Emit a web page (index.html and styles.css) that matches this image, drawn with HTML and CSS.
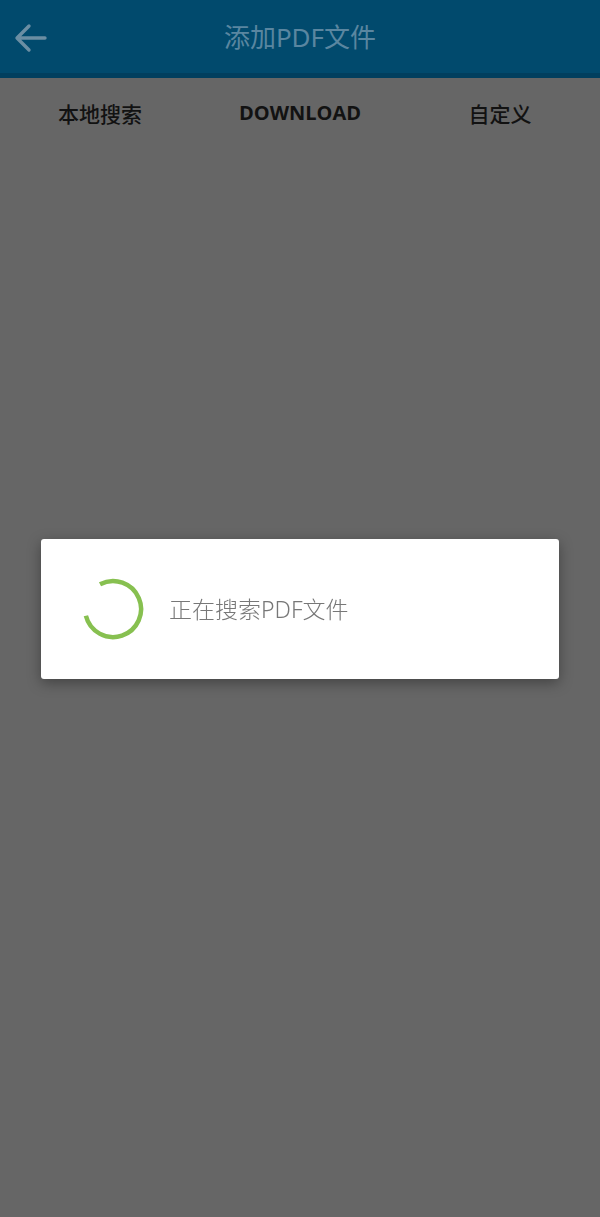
FILE: index.html
```html
<!DOCTYPE html>
<html lang="zh">
  <head>
    <meta name="viewport" content="width=device-width, initial-scale=1.0" />
    <title>添加PDF文件</title>
    <link rel="stylesheet" href="styles.css">
  </head>
  <body>
    <div class="header">
      <svg class="back" width="34" height="30" viewBox="0 0 34 30">
        <path d="M31 15 H4 M15 3 L3 15 L15 27" fill="none" stroke="#6b8ea3" stroke-width="3.4" stroke-linecap="round" stroke-linejoin="round"/>
      </svg>
      <div class="title">添加PDF文件</div>
    </div>
    <div class="tabs">
      <div class="tab">本地搜索</div>
      <div class="tab tab-active">DOWNLOAD</div>
      <div class="tab">自定义</div>
    </div>
    <div class="list"></div>

    <!-- loading dialog over the list -->
    <div class="overlay">
      <div class="dialog">
        <svg class="spinner" width="64" height="64" viewBox="0 0 64 64">
          <path d="M19 7.3 A28 28 0 1 1 4.9 38.8" fill="none" stroke="#87c050" stroke-width="4.5"/>
        </svg>
        <div class="dialog-text">正在搜索PDF文件</div>
      </div>
    </div>
  </body>
</html>
```

FILE: styles.css
```css
html, body
{
    margin: 0;
    padding: 0;
    height: 100%;
}

body
{
    background-color: #666666;
    font-family: "Noto Sans", "Noto Sans CJK SC", sans-serif;
}

.header
{
    height: 73px;
    background-color: #014a6d;
    border-bottom: 5px solid #013f5e;
    display: flex;
    align-items: center;
    justify-content: center;
    position: relative;
}

.back
{
    position: absolute;
    left: 14px;
    top: 23px;
}

.title
{
    color: #5a86a0;
    font-size: 26px;
    margin-top: -2px;
}

.tabs
{
    display: flex;
    height: 69px;
    align-items: center;
}

.tab
{
    flex: 1;
    text-align: center;
    color: #121212;
    font-size: 21px;
    font-weight: 500;
    font-family: "Noto Sans CJK SC", sans-serif;
}

.tab-active
{
    font-family: "Open Sans", "Noto Sans", sans-serif;
    font-weight: 700;
    font-size: 20px;
}

.overlay
{
    position: fixed;
    left: 0;
    top: 0;
    right: 0;
    bottom: 0;
    display: flex;
    align-items: center;
    justify-content: center;
}

.dialog
{
    width: 518px;
    height: 140px;
    background-color: #ffffff;
    border-radius: 3px;
    box-shadow: 0 4px 14px rgba(0, 0, 0, 0.35);
    display: flex;
    align-items: center;
    box-sizing: border-box;
    padding-left: 40px;
}

.spinner
{
    flex: none;
}

.dialog-text
{
    margin-left: 24px;
    color: #777777;
    font-size: 23px;
    font-weight: 300;
    margin-top: -1px;
}
```
